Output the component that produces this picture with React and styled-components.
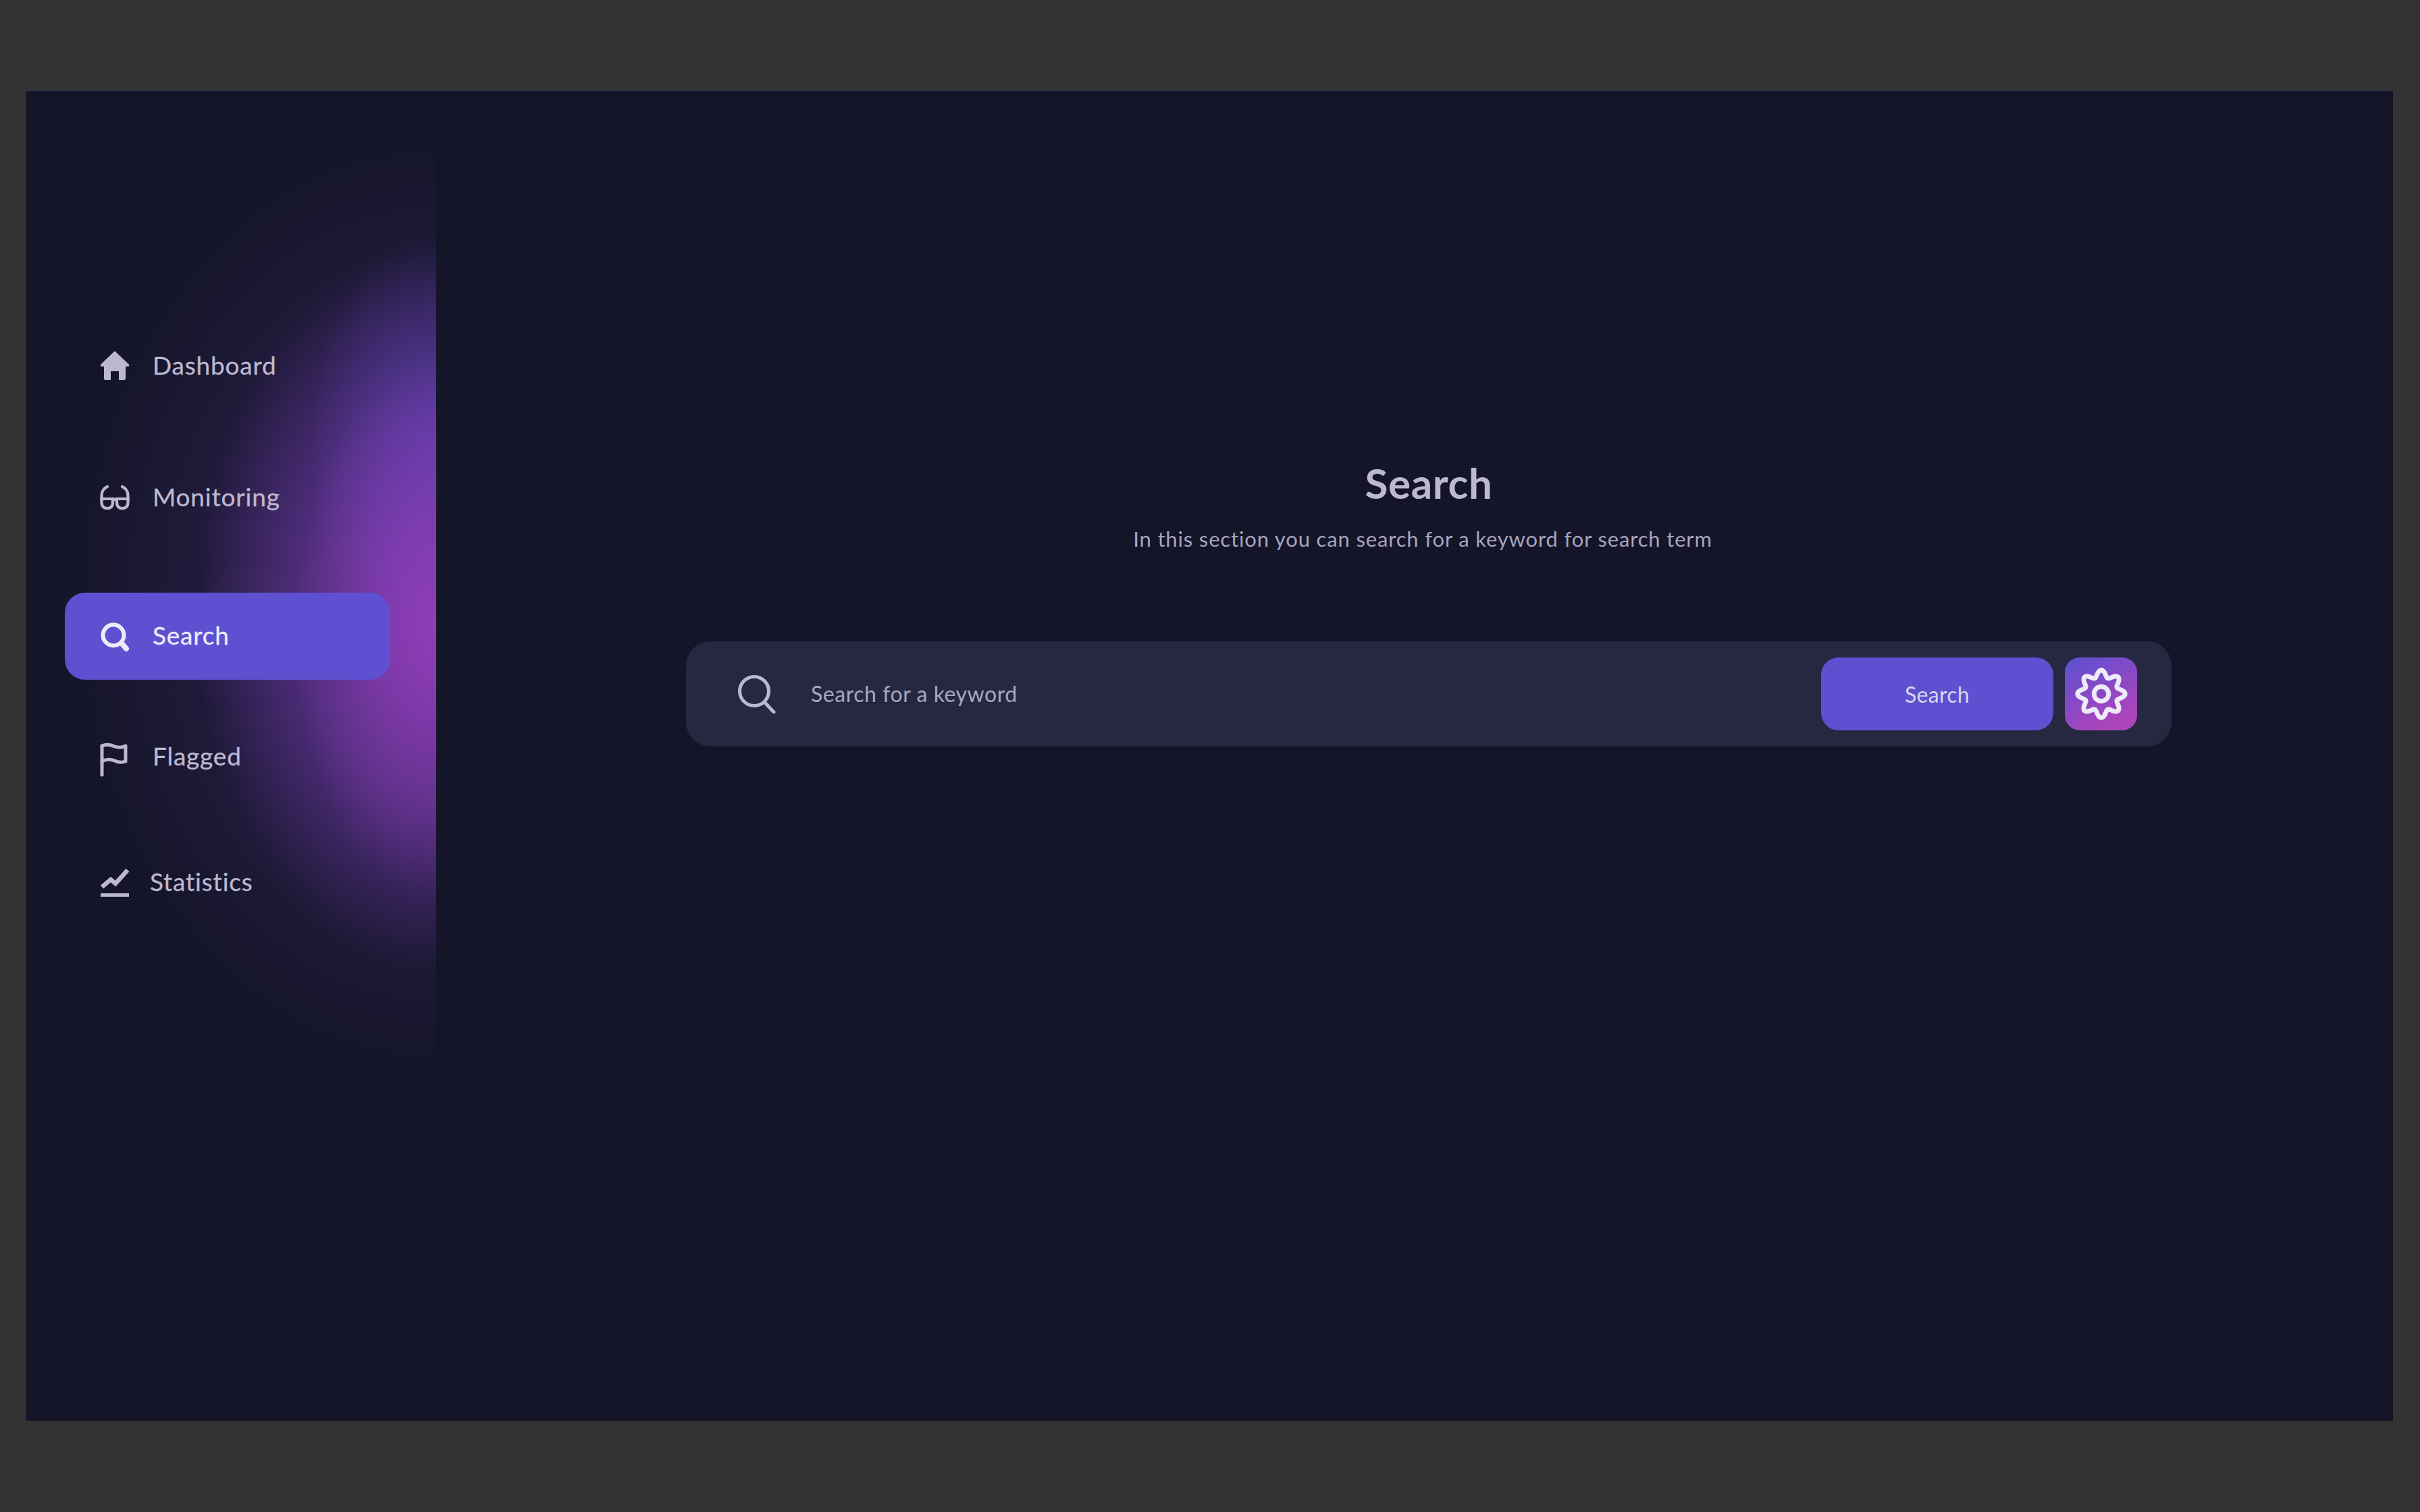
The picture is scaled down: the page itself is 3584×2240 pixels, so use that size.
import React from "react";
import styled, { createGlobalStyle } from "styled-components";

const GlobalStyle = createGlobalStyle`
  html, body {
    margin: 0;
    padding: 0;
    background: #333333;
    font-family: "Lato", "Open Sans", sans-serif;
  }
`;

const Page = styled.div`
  width: 3584px;
  height: 2240px;
  box-sizing: border-box;
  padding: 133px 40px 135px 39px;
  background: #333333;
`;

const Frame = styled.div`
  display: flex;
  height: 100%;
  background: #141528;
  border-top: 1px solid #5a5b66;
  box-sizing: border-box;
`;

const Sidebar = styled.aside`
  flex: 0 0 607px;
  box-sizing: border-box;
  padding: 344px 68px 0 57px;
  background:
    radial-gradient(ellipse 210px 400px at 100% 800px, rgba(155, 62, 190, 0.75) 0%, rgba(150, 62, 190, 0) 100%),
    radial-gradient(ellipse 190px 320px at 100% 530px, rgba(100, 72, 200, 0.5) 0%, rgba(100, 72, 200, 0) 100%),
    radial-gradient(ellipse 360px 540px at 100% 770px, rgba(122, 60, 178, 0.85) 0%, rgba(110, 58, 165, 0.55) 55%, rgba(90, 50, 140, 0) 100%),
    radial-gradient(ellipse 560px 720px at 100% 760px, rgba(70, 42, 115, 0.75) 0%, rgba(55, 36, 95, 0.35) 60%, rgba(40, 30, 70, 0) 100%);
`;

const NavList = styled.nav`
  display: flex;
  flex-direction: column;
`;

const NavItem = styled.div`
  display: flex;
  align-items: center;
  height: 129px;
  margin-top: ${({ $top }) => $top || 0}px;
  padding-left: 52px;
  border-radius: 30px;
  background: ${({ $active }) => ($active ? "#5f50d1" : "transparent")};
  color: ${({ $active }) => ($active ? "#eeeaf9" : "#bdb8cf")};
`;

const NavIcon = styled.svg`
  flex: 0 0 44px;
  width: 44px;
  height: 48px;
  margin-right: ${({ $gap }) => $gap || 34}px;
  overflow: visible;
`;

const NavLabel = styled.span`
  padding-bottom: 4px;
  font-size: 37px;
  font-weight: 400;
  letter-spacing: 0.8px;
  -webkit-text-stroke: 0.3px currentColor;
`;

const Main = styled.main`
  flex: 1;
  box-sizing: border-box;
  padding: 546px 0 0 370px;
`;

const Content = styled.section`
  display: flex;
  flex-direction: column;
  width: 2200px;
`;

const Title = styled.h1`
  margin: 0;
  font-size: 62px;
  line-height: 70px;
  font-weight: 700;
  text-align: center;
  color: #bdb8cf;
  letter-spacing: 0.6px;
`;

const Subtitle = styled.p`
  margin: 28px 18px 0 0;
  font-size: 31px;
  line-height: 40px;
  text-align: center;
  color: #a8a4bd;
  letter-spacing: 0.85px;
`;

const SearchBar = styled.div`
  display: flex;
  align-items: center;
  height: 156px;
  margin-top: 132px;
  padding: 0 51px 0 76px;
  box-sizing: border-box;
  border-radius: 36px;
  background: #252840;
`;

const BarIcon = styled.svg`
  flex: 0 0 58px;
  width: 58px;
  height: 58px;
  margin-right: 51px;
`;

const Placeholder = styled.span`
  flex: 1;
  padding-bottom: 2px;
  font-size: 32px;
  color: #aaa6bf;
  letter-spacing: 0.55px;
`;

const SearchButton = styled.button`
  width: 344px;
  height: 108px;
  border: 0;
  border-radius: 26px;
  background: #5f50d1;
  color: #d9d5ee;
  font-family: inherit;
  font-size: 32px;
  letter-spacing: 0.3px;
`;

const GearButton = styled.button`
  display: flex;
  align-items: center;
  justify-content: center;
  width: 107px;
  height: 108px;
  margin-left: 17px;
  padding: 0;
  border: 0;
  border-radius: 22px;
  background: linear-gradient(150deg, #5f50d1 5%, #ab44bb 80%);
`;

const gearPath = () => {
  const points = [];
  for (let i = 0; i < 160; i++) {
    const a = (i / 160) * Math.PI * 2;
    const r = 35 + 6 * Math.cos(a * 8);
    points.push(`${(50 + r * Math.sin(a)).toFixed(2)} ${(50 - r * Math.cos(a)).toFixed(2)}`);
  }
  return `M${points.join("L")}Z`;
};

const items = [
  {
    label: "Dashboard",
    top: 0,
    icon: (
      <path
        fill="currentColor"
        d="M22 1 L43 21 Q44 24 41 24 H38 V42 Q38 44 36 44 H28 V31 H16 V44 H8 Q6 44 6 42 V24 H3 Q0 24 1 21 Z"
      />
    ),
  },
  {
    label: "Monitoring",
    top: 66,
    icon: (
      <g fill="none" stroke="currentColor" strokeWidth="4.2" strokeLinecap="round">
        <path d="M2.5 25 H19 V30 Q19 39 11 39 Q2.5 39 2.5 30 Z" />
        <path d="M41.5 25 H25 V30 Q25 39 33 39 Q41.5 39 41.5 30 Z" />
        <path d="M19 27 Q22 24.5 25 27" />
        <path d="M2.5 27 V20 Q3 10 11 7" />
        <path d="M41.5 27 V20 Q41 10 33 7" />
      </g>
    ),
  },
  {
    label: "Search",
    top: 76,
    active: true,
    icon: (
      <g fill="none" stroke="currentColor" strokeLinecap="round">
        <circle cx="20" cy="22" r="15.5" strokeWidth="6" />
        <path d="M33 35 L39 42" strokeWidth="8" />
      </g>
    ),
  },
  {
    label: "Flagged",
    top: 50,
    icon: (
      <g fill="none" stroke="currentColor" strokeWidth="5" strokeLinecap="round" strokeLinejoin="round">
        <path d="M3 50 V7" />
        <path d="M3 7 Q12 3 22 8 Q30 11 38 7 V30 Q30 33 22 29 Q12 25 3 30" />
      </g>
    ),
  },
  {
    label: "Statistics",
    top: 57,
    gap: 30,
    icon: (
      <g fill="none" stroke="currentColor" strokeLinecap="butt" strokeLinejoin="miter">
        <path d="M3 30 L16 19 L23 25 L41 5" strokeWidth="6.5" />
        <path d="M1 42 H43" strokeWidth="5.5" />
      </g>
    ),
  },
];

const App = () => {
  return (
    <Page>
      <GlobalStyle />
      <Frame>
        <Sidebar>
          <NavList>
            {items.map((item) => (
              <NavItem key={item.label} $top={item.top} $active={item.active}>
                <NavIcon viewBox="0 0 44 48" $gap={item.gap}>
                  {item.icon}
                </NavIcon>
                <NavLabel>{item.label}</NavLabel>
              </NavItem>
            ))}
          </NavList>
        </Sidebar>
        <Main>
          <Content>
            <Title>Search</Title>
            <Subtitle>In this section you can search for a keyword for search term</Subtitle>
            <SearchBar>
              <BarIcon viewBox="0 0 58 58" fill="none" stroke="#bdb8cf" strokeWidth="5" strokeLinecap="round">
                <circle cx="25" cy="25" r="21.5" />
                <path d="M41 42 L54 56" />
              </BarIcon>
              <Placeholder>Search for a keyword</Placeholder>
              <SearchButton>Search</SearchButton>
              <GearButton>
                <svg width="86" height="86" viewBox="0 0 100 100" fill="none" stroke="#eeeaf9" strokeWidth="8">
                  <path d={gearPath()} strokeLinejoin="round" />
                  <circle cx="50" cy="50" r="12.5" />
                </svg>
              </GearButton>
            </SearchBar>
          </Content>
        </Main>
      </Frame>
    </Page>
  );
};

export default App;
